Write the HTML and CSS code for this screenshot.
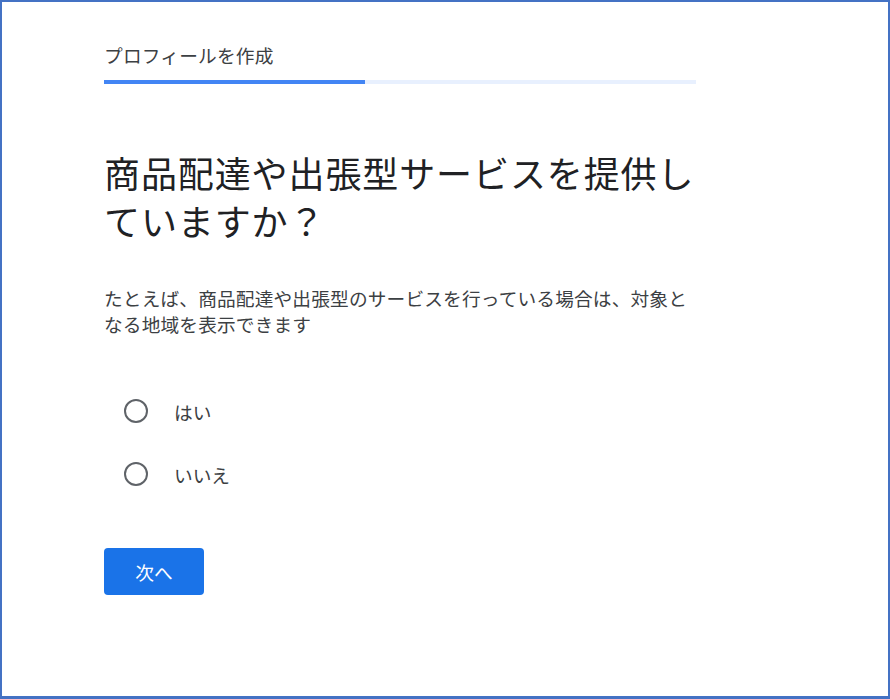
FILE: index.html
```html
<!DOCTYPE html>
<html lang="ja">
<head>
<meta charset="utf-8">
<link rel="stylesheet" href="styles.css">
</head>
<body>
<div class="frame">
  <main class="content">
    <div class="title">プロフィールを作成</div>
    <div class="progress"><div class="progress-fill"></div></div>
    <h1 class="heading">商品配達や出張型サービスを提供していますか？</h1>
    <p class="desc">たとえば、商品配達や出張型のサービスを行っている場合は、対象となる地域を表示できます</p>
    <div class="options">
      <label class="option"><span class="radio"></span><span class="option-label">はい</span></label>
      <label class="option"><span class="radio"></span><span class="option-label">いいえ</span></label>
    </div>
    <button class="next">次へ</button>
  </main>
</div>
</body>
</html>
```

FILE: styles.css
```css
html, body {
  margin: 0;
  padding: 0;
  background: #ffffff;
}
body {
  font-family: "Noto Sans CJK JP", "Noto Sans", sans-serif;
}
.frame {
  width: 890px;
  height: 699px;
  box-sizing: border-box;
  border: 2px solid #4472c4;
  border-bottom-width: 3px;
  overflow: hidden;
}
.content {
  margin-left: 102px;
  width: 592px;
  padding-top: 40px;
  display: flex;
  flex-direction: column;
}
.title {
  font-size: 18.7px;
  line-height: 26px;
  color: #3c4043;
  letter-spacing: 0.2px;
}
.progress {
  margin-top: 12px;
  height: 4px;
  background: #e8f0fe;
}
.progress-fill {
  width: 261px;
  height: 100%;
  background: #4285f4;
}
.heading {
  margin: 64px 0 0 0;
  font-size: 36px;
  line-height: 48px;
  font-weight: 400;
  color: #202124;
  letter-spacing: 0.9px;
}
.desc {
  margin: 41px 0 0 0;
  font-size: 18.7px;
  line-height: 26px;
  color: #3c4043;
  letter-spacing: 0.15px;
}
.options {
  margin-top: 50px;
  display: flex;
  flex-direction: column;
  gap: 15px;
}
.option {
  height: 48px;
  display: flex;
  align-items: center;
}
.radio {
  margin-left: 20px;
  width: 24px;
  height: 24px;
  box-sizing: border-box;
  border: 2.5px solid #5f6368;
  border-radius: 50%;
}
.option-label {
  margin-left: 26px;
  font-size: 18.7px;
  color: #3c4043;
}
.next {
  margin-top: 50px;
  width: 100px;
  height: 47px;
  border: none;
  border-radius: 4px;
  background: #1a73e8;
  color: #ffffff;
  font-family: inherit;
  font-size: 18.7px;
  padding: 0;
}
```
